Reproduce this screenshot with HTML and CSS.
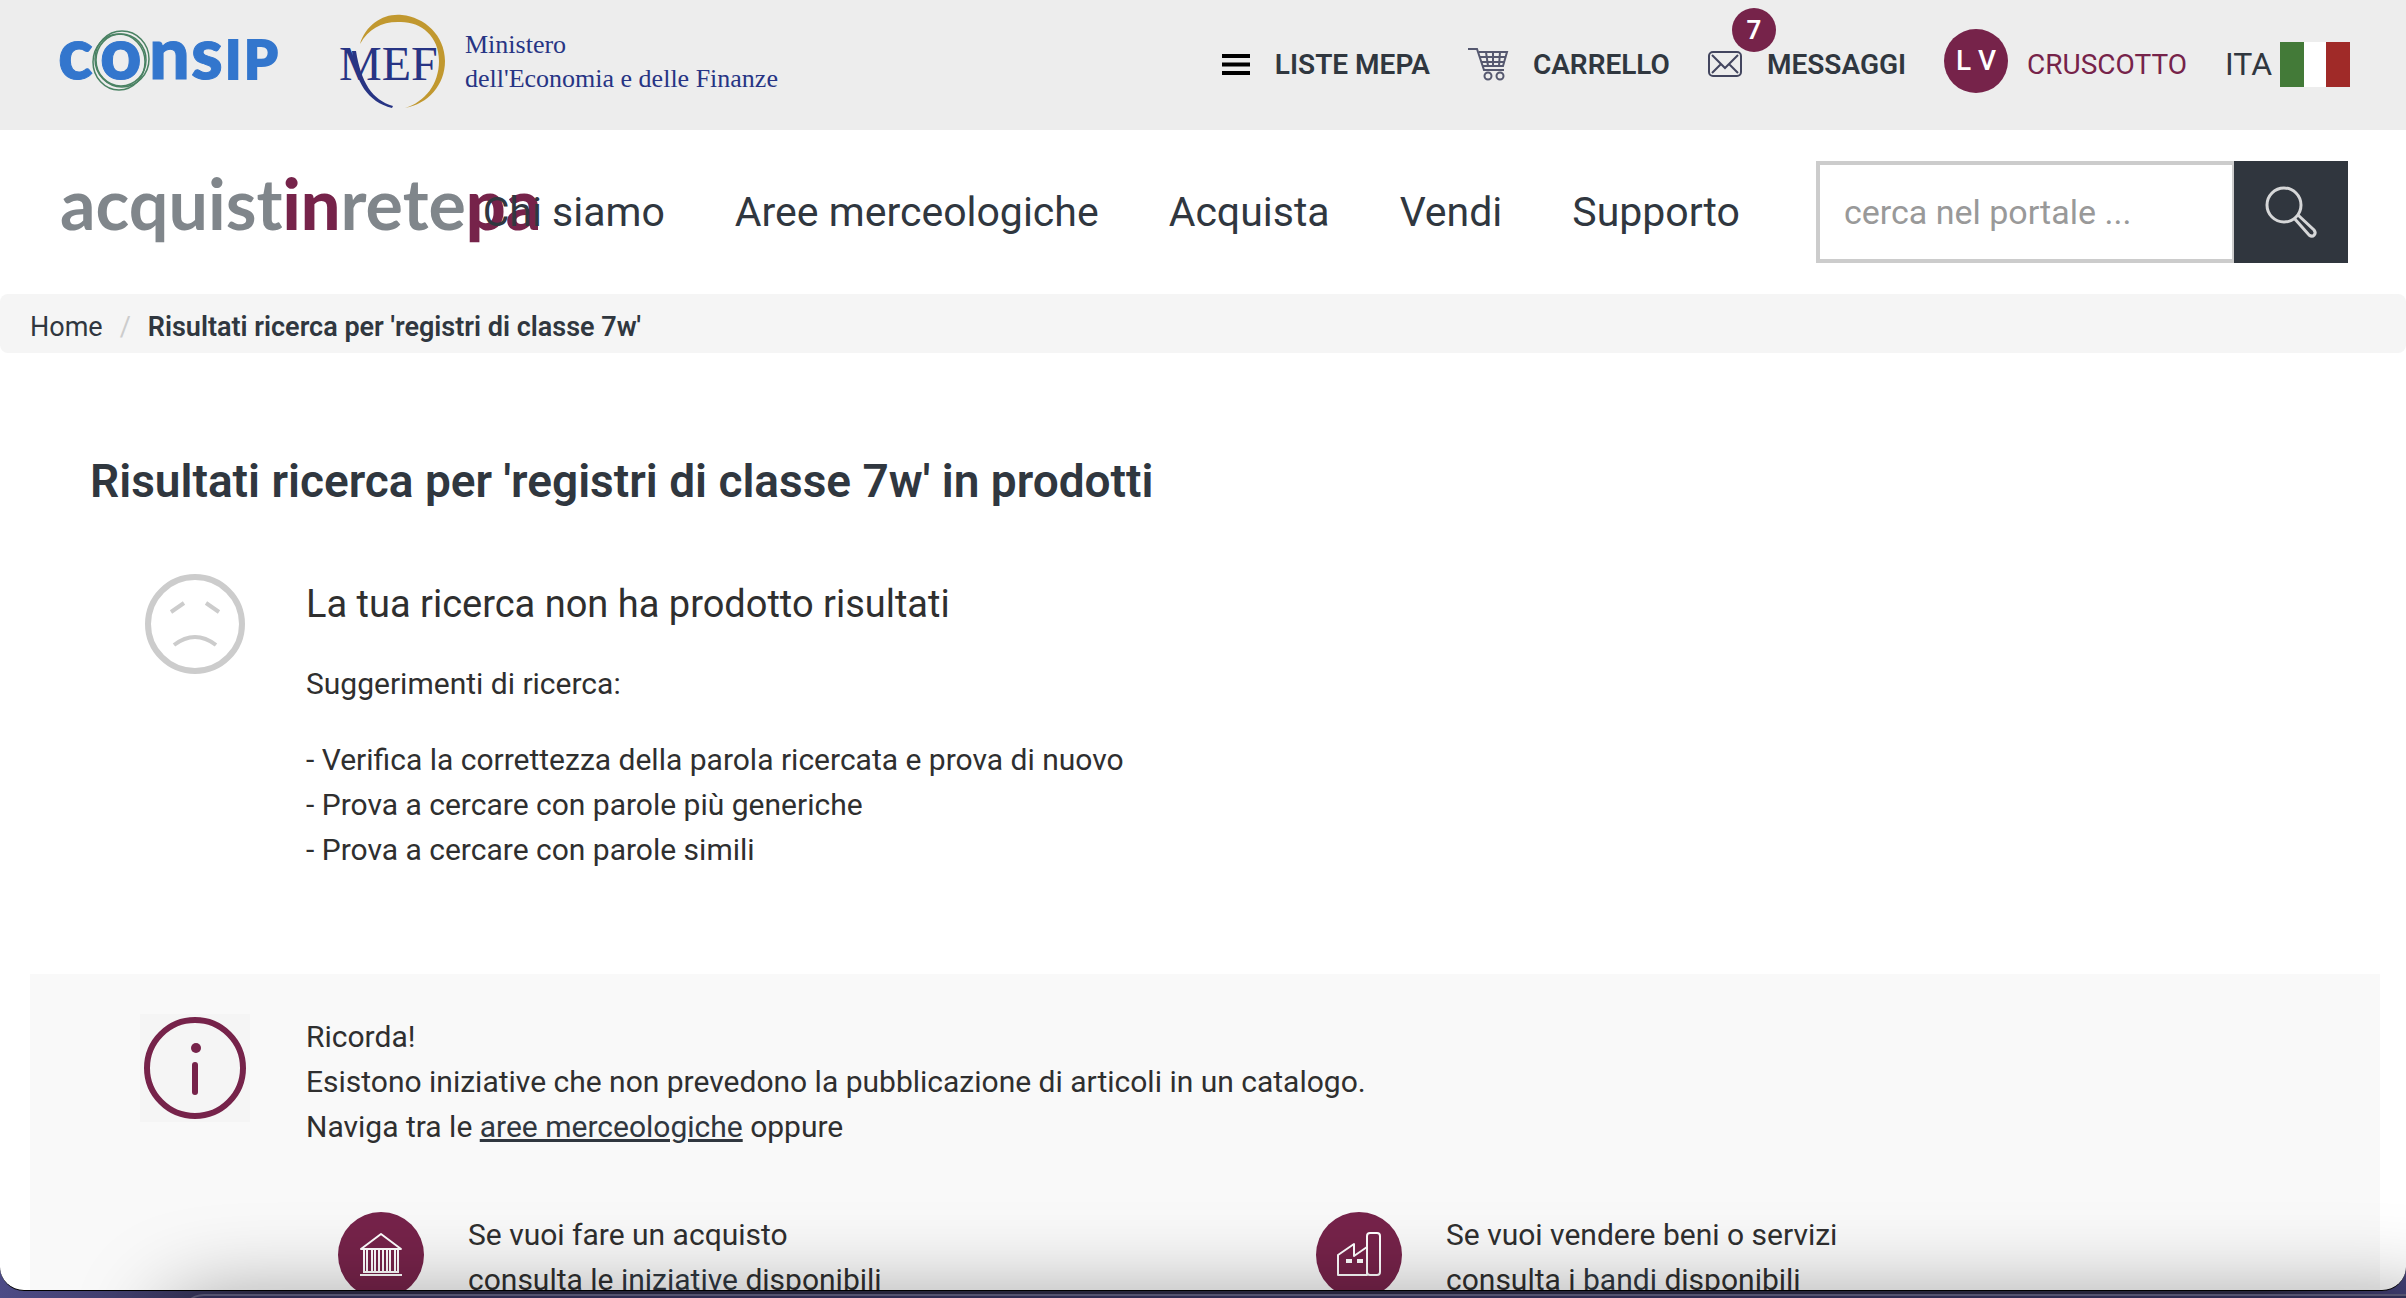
FILE: index.html
```
<!DOCTYPE html>
<html lang="it">
<head>
    <meta charset="UTF-8">
    <meta name="viewport" content="width=device-width, initial-scale=1.0">
    <title>Risultati ricerca - Acquistinretepa</title>
    <link rel="stylesheet" href="styles.css">
</head>
<body>
<div class="window">
    <div class="topbar">
        <a href="#" class="consip" aria-label="Consip">
            <svg width="222" height="60" viewBox="0 0 222 60">
                <g class="consip-text">
                    <text x="-2" y="47">c</text>
                    <text x="40" y="47">o</text>
                    <text x="89" y="47">n</text>
                    <text x="131" y="47">s</text>
                    <text x="165" y="47" class="small">I</text>
                    <text x="184" y="47" class="small">P</text>
                </g>
                <g fill="none" stroke="#4a8263" stroke-width="1.500">
                    <ellipse cx="62" cy="27" rx="27" ry="28"/>
                    <ellipse cx="59" cy="30" rx="26" ry="28"/>
                    <ellipse cx="61" cy="28" rx="25" ry="26"/>
                </g>
            </svg>
        </a>
        <a href="#" class="mef">
            <svg width="110" height="96" viewBox="0 0 110 96" aria-label="MEF">
                <path d="M21 30C27 10 45-1 63 1c22 2 43 20 43 46 0 24-17 43-40 47 20-6 34-24 34-47C100 22 82 8 62 8 44 7 30 14 21 30z" fill="#c1982f"/>
                <path d="M13 37C16 68 29 88 53 94l1-2C33 86 22 68 17 37z" fill="#273484"/>
                <text x="0" y="66" class="mef-text">MEF</text>
            </svg>
            <span>Ministero<br>dell'Economia e delle Finanze</span>
        </a>
        <nav class="tools">
            <a href="#">
                <svg width="28" height="24" viewBox="0 0 28 24"><path d="M0 4h28M0 12.500h28M0 21h28" stroke="#000" stroke-width="4"/></svg>
                LISTE MEPA
            </a>
            <a href="#">
                <svg width="40" height="34" viewBox="0 0 40 34" fill="none" stroke="#55586f" stroke-width="2">
                    <path d="M0 2h9l7 21h20M11 5h28l-4 14H15M12 10h26M14 15h22M18 5l2 14M25 5v14M32 5l-1 14"/>
                    <circle cx="20" cy="29" r="3.500"/><circle cx="32" cy="29" r="3.500"/>
                </svg>
                CARRELLO
            </a>
            <a href="#" class="messages">
                <svg width="34" height="26" viewBox="0 0 34 26" fill="none" stroke="#43465f" stroke-width="2">
                    <rect x="1" y="1" width="32" height="24" rx="4"/>
                    <path d="M4 4l13 13L30 4M4 22l9-9M30 22l-9-9"/>
                </svg>
                MESSAGGI
                <span class="badge">7</span>
            </a>
            <a href="#" class="dashboard"><span class="avatar">L V</span>CRUSCOTTO</a>
            <a href="#" class="lang">ITA <span class="flag"></span></a>
        </nav>
    </div>

    <header class="header">
        <a href="#" class="logo">acquist<b>in</b>rete<b>pa</b></a>
        <nav class="menu">
            <a href="#">Chi siamo</a>
            <a href="#">Aree merceologiche</a>
            <a href="#">Acquista</a>
            <a href="#">Vendi</a>
            <a href="#">Supporto</a>
        </nav>
        <form class="search">
            <input type="text" placeholder="cerca nel portale ..." aria-label="cerca nel portale">
            <button type="button" aria-label="Cerca">
                <svg width="52" height="52" viewBox="0 0 52 52" fill="none" stroke="#d6d7d8" stroke-width="3">
                    <circle cx="19" cy="19" r="17"/>
                    <path d="M33 29l16 15c3 4-1 8-5 5L29 32"/>
                </svg>
            </button>
        </form>
    </header>

    <div class="breadcrumb">
        <a href="#">Home</a>
        <span class="sep">/</span>
        <b>Risultati ricerca per 'registri di classe 7w'</b>
    </div>

    <main>
        <h1>Risultati ricerca per 'registri di classe 7w' in prodotti</h1>
        <section class="row empty">
            <svg class="icon" width="102" height="102" viewBox="0 0 102 102" fill="none" stroke="#ccc" stroke-width="6">
                <circle cx="51" cy="51" r="47"/>
                <path d="M27 39l13-9M75 39l-13-9" stroke-width="4"/>
                <path d="M30 72q21-16 42 0" stroke-width="4"/>
            </svg>
            <div>
                <h2>La tua ricerca non ha prodotto risultati</h2>
                <p>Suggerimenti di ricerca:</p>
                <p>- Verifica la correttezza della parola ricercata e prova di nuovo<br>
                - Prova a cercare con parole più generiche<br>
                - Prova a cercare con parole simili</p>
            </div>
        </section>

        <section class="panel">
            <div class="row">
                <svg class="icon info" width="110" height="108" viewBox="0 0 110 108">
                    <rect width="110" height="108" fill="#f5f5f5"/>
                    <circle cx="55" cy="54" r="48" fill="none" stroke="#76234a" stroke-width="6"/>
                    <circle cx="56" cy="34" r="5" fill="#76234a"/>
                    <path d="M55 51v27" stroke="#76234a" stroke-width="6" stroke-linecap="round"/>
                </svg>
                <p>Ricorda!<br>
                Esistono iniziative che non prevedono la pubblicazione di articoli in un catalogo.<br>
                Naviga tra le <a href="#" class="underline">aree merceologiche</a> oppure</p>
            </div>
            <div class="choices">
                <div class="choice">
                    <svg width="86" height="86" viewBox="0 0 86 86">
                        <circle cx="43" cy="43" r="43" fill="#76234a"/>
                        <g fill="none" stroke="#fff" stroke-width="2">
                            <path d="M23 37L43 22l20 15z" stroke-linejoin="round"/>
                            <path d="M26 38v21M29 38v21M34 38v21M37 38v21M41 38v21M45 38v21M49 38v21M52 38v21M57 38v21M60 38v21"/>
                            <path d="M25 60h36M22 63h42"/>
                        </g>
                    </svg>
                    <p>Se vuoi fare un acquisto<br>consulta le <a href="#">iniziative</a> disponibili</p>
                </div>
                <div class="choice">
                    <svg width="86" height="86" viewBox="0 0 86 86">
                        <circle cx="43" cy="43" r="43" fill="#76234a"/>
                        <g fill="none" stroke="#fff" stroke-width="2" stroke-linejoin="round">
                            <path d="M22 63V43l16-11v12l13-9v28z"/>
                            <rect x="51" y="21" width="13" height="42" rx="3"/>
                            <path d="M30 49h6M41 49h6" stroke-width="4"/>
                        </g>
                    </svg>
                    <p>Se vuoi vendere beni o servizi<br>consulta i <a href="#">bandi</a> disponibili</p>
                </div>
            </div>
        </section>
    </main>
</div>
<div class="next-window"></div>
</body>
</html>
```

FILE: styles.css
```
* { box-sizing: border-box; }
body {
    margin: 0;
    height: 100vh;
    overflow: hidden;
    position: relative;
    font-family: Roboto, "Liberation Sans", sans-serif;
    font-size: 30px;
    line-height: 45px;
    color: #2f2f2f;
    background: linear-gradient(90deg, #4d4b86, #2e2b47 12%, #2e2b47 94%, #45427a);
}
a { color: #30373f; text-decoration: none; }
p { margin: 0; }
svg { flex-shrink: 0; display: block; overflow: visible; }

.window {
    height: calc(100vh - 7px);
    overflow: hidden;
    background: #fff;
    border-bottom: 1px solid #000;
    border-radius: 0 0 24px 24px;
}
/* the window behind throws its shadow on the page */
.next-window {
    position: absolute;
    left: 180px;
    right: -40px;
    top: calc(100vh - 4px);
    height: 60px;
    border-top: 2px solid #54526e;
    border-radius: 24px;
    background: #302d52;
    box-shadow: 0 24px 90px 16px rgba(0, 0, 0, .4);
}

.topbar {
    display: flex;
    align-items: center;
    height: 130px;
    padding: 0 56px 6px 60px;
    background: #ededed;
}
.consip-text { font-family: Lato, sans-serif; font-weight: 900; font-size: 72px; fill: #3376cd; stroke: #3376cd; stroke-width: 1px; }
.consip-text .small { font-size: 54px; stroke-width: 2px; }
.mef {
    display: flex;
    align-items: center;
    gap: 16px;
    margin-left: 57px;
    font-family: "Liberation Serif", serif;
    font-size: 26px;
    line-height: 34px;
    color: #273484;
}
.mef-text { font-size: 48px; fill: #273484; }
.tools { display: flex; align-items: center; gap: 38px; margin-left: auto; padding-top: 4px; white-space: nowrap; }
.tools a { display: flex; align-items: center; gap: 25px; font-size: 28px; font-weight: 600; }
.tools .messages { position: relative; }
.badge {
    position: absolute;
    left: 24px;
    top: -34px;
    width: 44px;
    height: 44px;
    line-height: 44px;
    border-radius: 50%;
    text-align: center;
    font-size: 26px;
    color: #fff;
    background: #76234a;
}
.tools .dashboard { gap: 19px; font-weight: normal; color: #76234a; }
.avatar {
    width: 64px;
    height: 64px;
    line-height: 64px;
    margin-bottom: 6px;
    border-radius: 50%;
    text-align: center;
    font-weight: 500;
    color: #fff;
    background: #76234a;
}
.tools .lang { gap: 8px; font-size: 32px; font-weight: normal; }
.flag { width: 70px; height: 45px; background: linear-gradient(90deg, #437a38 34%, #fff 34%, #fff 66%, #a02a28 66%); }

.header { display: flex; align-items: center; height: 164px; padding: 0 58px 0 60px; }
.logo {
    flex: 1 1 0;
    min-width: 0;
    padding-bottom: 18px;
    white-space: nowrap;
    font-family: Lato, sans-serif;
    font-weight: 700;
    font-size: 70px;
    line-height: 84px;
    color: #80868b;
}
.logo b { font-weight: 900; color: #76234a; }
.menu { display: flex; gap: 70px; margin-right: 76px; font-size: 41px; position: relative; white-space: nowrap; }
.search { display: flex; }
.search input {
    width: 418px;
    height: 102px;
    padding: 0 24px;
    border: 4px solid #ccc;
    border-right-width: 2px;
    font: inherit;
    font-size: 34px;
    color: #30373f;
}
.search input::placeholder { color: #999; }
.search button {
    display: flex;
    align-items: center;
    justify-content: center;
    width: 114px;
    border: none;
    background: #30363e;
}

.breadcrumb {
    display: flex;
    align-items: center;
    gap: 17px;
    height: 59px;
    padding: 7px 30px 0;
    border-radius: 8px;
    background: #f5f5f5;
    font-size: 27px;
    color: #30373f;
}
.breadcrumb .sep { color: #ccc; }
.breadcrumb b { font-weight: 600; }

main { padding: 96px 26px 0 30px; }
h1 { margin: 0; padding-left: 60px; font-size: 46px; line-height: 64px; font-weight: 600; color: #30373f; }
.row { display: flex; align-items: flex-start; gap: 56px; padding-left: 110px; }
.row .icon { margin: 0 4px; }
.row .info { margin: 0; }
.empty { padding-top: 60px; }
.empty h2 { margin: 3px 0 29px; font-size: 38px; line-height: 56px; font-weight: normal; }
.empty p { margin-bottom: 31px; }
.panel { margin-top: 71px; padding-top: 40px; height: 400px; background: #f9f9f9; }
.choices { display: grid; grid-template-columns: 1fr 1fr; padding: 63px 86px 0 308px; }
.choice { display: flex; gap: 44px; }
.underline { text-decoration: underline; text-decoration-thickness: 3px; }
```
